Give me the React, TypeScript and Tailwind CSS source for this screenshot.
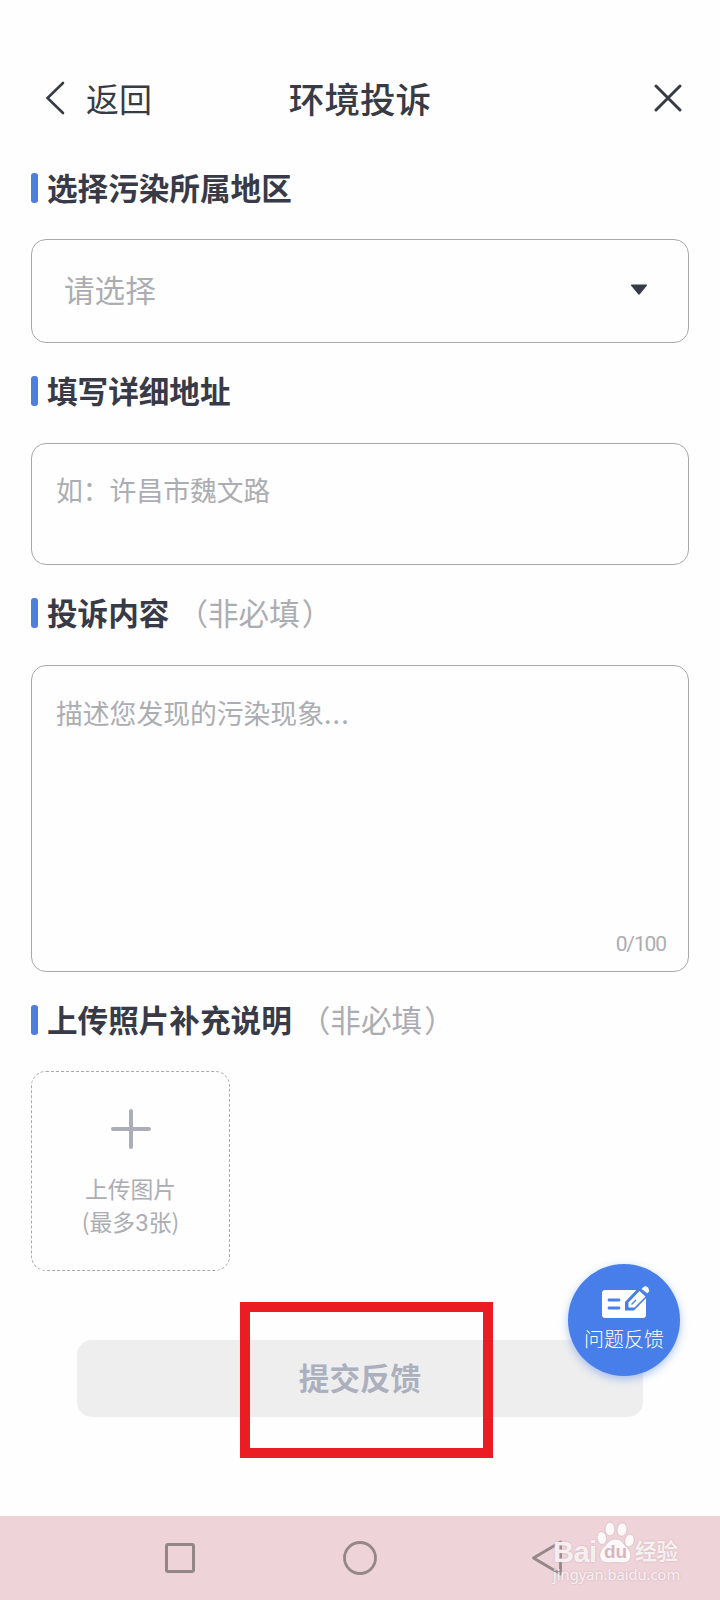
import type { ReactNode } from 'react'

interface SectionTitleProps {
  children: ReactNode
  optional?: boolean
}

function SectionTitle({ children, optional }: SectionTitleProps) {
  return (
    <div className="flex h-[30px] items-center">
      <span className="h-[30px] w-[7px] shrink-0 rounded-[3px] bg-[#4d7fdb]" />
      <h2 className="-mt-0.5 ml-[9px] whitespace-nowrap text-[30.6px] font-bold leading-[30px] text-[#383b47]">{children}</h2>
      {optional && (
        <span className="-mt-0.5 ml-2 whitespace-nowrap text-[30.6px] leading-[30px] text-[#abadb3]">
          （非必填<span className="ml-0.5">）</span>
        </span>
      )}
    </div>
  )
}

function Header() {
  return (
    <header className="mt-[72px] grid h-[54px] grid-cols-3 items-center pl-[45px] pr-[38px] text-[#383b45]">
      <button className="flex items-center">
        <svg width="20" height="34" viewBox="0 0 20 34" fill="none" stroke="currentColor" strokeWidth="2.6" strokeLinecap="round" className="-mt-0.5">
          <path d="M18 2 2.5 17 18 32" />
        </svg>
        <span className="-mt-0.5 ml-[21px] text-[33px] leading-none">返回</span>
      </button>
      <h1 className="-ml-[7px] -mt-[3px] whitespace-nowrap text-center text-[35.6px] font-medium leading-none">环境投诉</h1>
      <button className="justify-self-end">
        <svg width="28" height="28" viewBox="0 0 28 28" fill="none" stroke="currentColor" strokeWidth="3" strokeLinecap="round" className="-mt-0.5">
          <path d="m2 2 24 24M26 2 2 26" />
        </svg>
      </button>
    </header>
  )
}

function FeedbackButton() {
  return (
    <button className="absolute left-[568px] top-[1264px] flex size-[112px] flex-col items-center rounded-full bg-[#477eea] pt-[21px] text-white shadow-[0_3px_9px_rgba(71,126,234,0.45)]">
      <svg width="50" height="34" viewBox="0 0 50 34" className="ml-1">
        <rect x="1" y="5" width="44" height="28" rx="3" fill="#fff" />
        <path d="M8 15h10M8 23h10" stroke="#477eea" strokeWidth="2.8" strokeLinecap="round" />
        <path d="M24 25.5V17L40 0l10 8-17 17.5z" fill="#477eea" />
        <path d="m27.5 17.5 11-11.5 6 5.5L33.5 22.500h-6z" fill="#fff" />
        <path d="m40.500 4 2-2q2-1.500 4 .3t1.800 4l-2 2z" fill="#fff" />
        <path d="M30.500 19.500 35 15" stroke="#477eea" strokeWidth="1.3" />
      </svg>
      <span className="mt-[9px] whitespace-nowrap text-[20px] font-light leading-[22px]">问题反馈</span>
    </button>
  )
}

function Watermark() {
  return (
    <div className="absolute left-[553px] top-[1520px] h-[64px] w-[130px] text-white/80 [text-shadow:0_0_2px_#c9a9b0]">
      <div className="flex h-[44px] items-start">
        <span className="mt-[17px] w-[44px] font-[Liberation_Sans] text-[29px] font-bold leading-[30px] tracking-[-0.5px]">Bai</span>
        <div className="relative h-[44px] w-[38px]">
          <svg width="38" height="44" viewBox="0 0 38 44" fill="#fff" fillOpacity="0.85" stroke="#d7b9c1" strokeWidth="0.7">
            <ellipse cx="4.8" cy="18" rx="4.7" ry="6.5" transform="rotate(-8 4.8 18)" />
            <ellipse cx="13" cy="9" rx="4.9" ry="6.8" />
            <ellipse cx="25" cy="9.5" rx="4.9" ry="6.8" transform="rotate(8 25 9.5)" />
            <ellipse cx="32.5" cy="20.5" rx="4.7" ry="6.5" transform="rotate(10 32.5 20.5)" />
            <path d="M18.500 19c6 0 7.500 4.500 11.500 8.500 5.500 5 5 13.500-1.500 15-3 .8-6.500 0-10 0s-7 .8-10 0c-7-1.500-7.500-10-2-15C10.500 23.500 12.500 19 18.500 19z" />
          </svg>
          <span className="absolute left-[7px] top-[22px] font-[Liberation_Sans] text-[19px] font-bold leading-[20px] text-[#d9b6bf] [text-shadow:none]">du</span>
        </div>
        <span className="mt-[18px] whitespace-nowrap text-[21.5px] font-bold leading-[24px]">经验</span>
      </div>
      <div className="mt-0.5 whitespace-nowrap font-[Noto_Sans] text-[14.7px] leading-[16px]">jingyan.baidu.com</div>
    </div>
  )
}

function NavBar() {
  return (
    <nav className="mt-auto grid h-[84px] grid-cols-3 bg-[#eed3d9] px-[88px]">
      <svg className="ml-[75px] mt-[25px]" width="34" height="34" viewBox="0 0 34 34" fill="none" stroke="#948788" strokeWidth="3">
        <rect x="3.5" y="3.5" width="27" height="27" rx="1.5" />
      </svg>
      <svg className="mt-[25px] justify-self-center" width="34" height="34" viewBox="0 0 34 34" fill="none" stroke="#948788" strokeWidth="2.8">
        <circle cx="17" cy="17" r="15.5" />
      </svg>
      <svg className="ml-[80px] mt-[23px]" width="34" height="38" viewBox="0 0 34 38" fill="none" stroke="#948788" strokeWidth="2.8" strokeLinejoin="round">
        <path d="M29.5 3 2.5 19l27 16z" />
      </svg>
    </nav>
  )
}

export default function App() {
  return (
    <div className="relative flex h-[1600px] w-[720px] flex-col overflow-hidden bg-[#fefefe] font-['Noto_Sans_CJK_SC',sans-serif]">
      <Header />

      <main className="mt-[47px] px-[31px]">
        <SectionTitle>选择污染所属地区</SectionTitle>
        <div className="mt-9 flex h-[104px] items-center justify-between rounded-[15px] border border-[#a9a9ab] pl-8 pr-10">
          <span className="-mt-1 text-[30.6px] leading-none text-[#abadb3]">请选择</span>
          <svg width="18" height="12" viewBox="0 0 18 12" fill="#383b45" className="-mt-0.5">
            <path d="M1.5.5h15q1 .3.3 1.2l-7 8.6q-.8.8-1.6 0l-7-8.6Q.5.8 1.5.5z" />
          </svg>
        </div>

        <div className="mt-[33px]">
          <SectionTitle>填写详细地址</SectionTitle>
        </div>
        <div className="mt-[37px] h-[122px] rounded-[15px] border border-[#a9a9ab] px-6 pt-[31px] text-[26.8px] leading-[30px] text-[#abadb3]">
          如：许昌市魏文路
        </div>

        <div className="mt-[33px]">
          <SectionTitle optional>投诉内容</SectionTitle>
        </div>
        <div className="mt-[37px] flex h-[307px] flex-col justify-between rounded-[15px] border border-[#a9a9ab] pb-[15px] pl-6 pr-[22px] pt-8 text-[#abadb3]">
          <p className="text-[26.8px] leading-[30px]">
            描述您发现的污染现象<span className="tracking-[1.2px]">...</span>
          </p>
          <span className="self-end font-[Roboto] text-[21px] leading-6 tracking-[-1.1px]">0/100</span>
        </div>

        <div className="mt-[33px]">
          <SectionTitle optional>上传照片补充说明</SectionTitle>
        </div>
        <button className="mt-9 flex h-[200px] w-[199px] flex-col items-center rounded-[15px] border border-dashed border-[#a9a9ab] pt-[37px] text-[22.8px] leading-[33px] text-[#abadb3]">
          <svg width="40" height="40" viewBox="0 0 40 40" stroke="#abadb9" strokeWidth="4" strokeLinecap="round">
            <path d="M20 2v36M2 20h36" />
          </svg>
          <span className="mt-[23px]">上传图片</span>
          <span>
            (最多<span className="font-[Roboto] text-[24px]">3</span>张)
          </span>
        </button>

        <button className="mx-[46px] mt-[69px] flex h-[77px] w-[566px] items-center justify-center rounded-[15px] bg-[#eeeeee] pb-[3px] text-[30.6px] font-bold leading-none text-[#acb0be]">
          提交反馈
        </button>
      </main>

      <NavBar />

      <FeedbackButton />
      <div className="pointer-events-none absolute left-[240px] top-[1302px] h-[156px] w-[253px] border-[10px] border-[#ea1c24]" />
      <Watermark />
    </div>
  )
}
